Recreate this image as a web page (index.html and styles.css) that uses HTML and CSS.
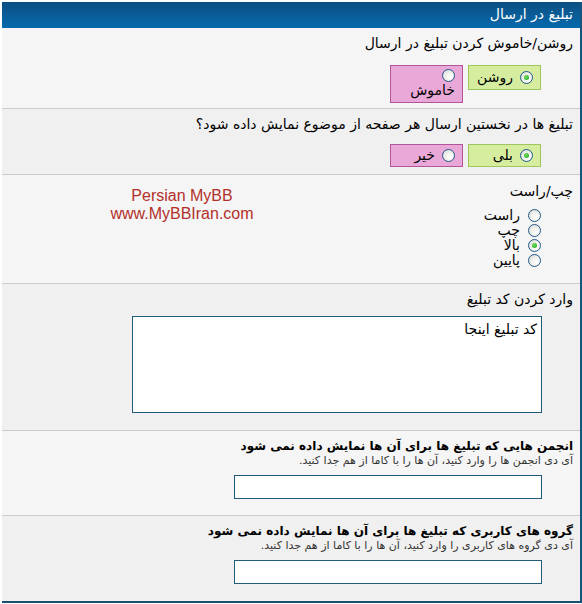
FILE: index.html
```html
<!DOCTYPE html>
<html lang="fa" dir="rtl">
<head>
<meta charset="utf-8">
<title>تبلیغ در ارسال</title>
<link rel="stylesheet" href="styles.css">
</head>
<body>
<div class="panel">
  <div class="head">تبلیغ در ارسال</div>

  <div class="row light first">
    <div class="title">روشن/خاموش کردن تبلیغ در ارسال</div>
    <div class="choices">
      <label class="choice yes"><span class="radio on"></span><span>روشن</span></label>
      <label class="choice no"><span class="radio"></span><span>خاموش</span></label>
    </div>
  </div>

  <div class="row dark">
    <div class="title">تبلیغ ها در نخستین ارسال هر صفحه از موضوع نمایش داده شود؟</div>
    <div class="choices">
      <label class="choice yes"><span class="radio on"></span><span>بلی</span></label>
      <label class="choice no"><span class="radio"></span><span>خیر</span></label>
    </div>
  </div>

  <div class="row light split">
    <div class="side">
      <div class="title">چپ/راست</div>
      <ul class="list">
        <li><span class="radio"></span><span>راست</span></li>
        <li><span class="radio"></span><span>چپ</span></li>
        <li><span class="radio on"></span><span>بالا</span></li>
        <li><span class="radio"></span><span>پایین</span></li>
      </ul>
    </div>
    <div class="promo" dir="ltr">Persian MyBB<br>www.MyBBIran.com</div>
  </div>

  <div class="row dark code">
    <div class="title">وارد کردن کد تبلیغ</div>
    <textarea class="area">کد تبلیغ اینجا</textarea>
  </div>

  <div class="row light field">
    <div class="title strong">انجمن هایی که تبلیغ ها برای آن ها نمایش داده نمی شود</div>
    <div class="desc">آی دی انجمن ها را وارد کنید، آن ها را با کاما از هم جدا کنید.</div>
    <input class="text" type="text">
  </div>

  <div class="row dark field last">
    <div class="title strong">گروه های کاربری که تبلیغ ها برای آن ها نمایش داده نمی شود</div>
    <div class="desc">آی دی گروه های کاربری را وارد کنید، آن ها را با کاما از هم جدا کنید.</div>
    <input class="text" type="text">
  </div>
</div>
</body>
</html>
```

FILE: styles.css
```css
html, body {
  margin: 0;
  padding: 0;
  background: #ffffff;
}

body {
  padding-top: 2px;
  font-family: "DejaVu Sans", "Liberation Sans", sans-serif;
  font-size: 14px;
  color: #000;
}

.panel {
  width: 578px;
  border-right: 2px solid #16557f;
  border-bottom: 2px solid #1d4f6e;
}

.head {
  height: 26px;
  line-height: 24px;
  padding: 0 7px;
  color: #ffffff;
  font-size: 14px;
  background: linear-gradient(to bottom, #0c4e80 0%, #0a5d98 50%, #0568ad 100%);
}

.row {
  padding: 7px 7px 7px;
  border-top: 1px solid #cccccc;
}

.head + .row { border-top: none; }

.light { background: #f5f5f5; }
.dark { background: #f0f0f0; }

.title {
  line-height: 16px;
  font-size: 14px;
}

.title.strong {
  font-size: 12px;
  font-weight: bold;
}

.choices {
  display: flex;
  gap: 5px;
  padding-right: 32px;
  margin-top: 14px;
  align-items: flex-start;
}

.first {
  padding-bottom: 5px;
}

.choice {
  box-sizing: border-box;
  width: 73px;
  padding: 3px 7px;
  display: flex;
  flex-wrap: wrap;
  align-items: center;
  column-gap: 7px;
  line-height: 17px;
  font-size: 14px;
}

.choice.yes {
  background: #d6eda0;
  border: 1px solid #9fc65e;
}

.choice.no {
  background: #eaa8d8;
  border: 1px solid #b1569b;
}

.dark .choices { margin-top: 12px; }
.dark .choice { padding: 2px 7px; }

.radio {
  box-sizing: border-box;
  width: 13px;
  height: 13px;
  border-radius: 50%;
  border: 1px solid #1f5a8b;
  background: radial-gradient(circle at 65% 65%, #ffffff 0%, #f2f2ee 40%, #d6d6cf 100%);
  display: inline-flex;
  align-items: center;
  justify-content: center;
  flex: none;
}

.radio.on::after {
  content: "";
  width: 5px;
  height: 5px;
  border-radius: 50%;
  background: radial-gradient(circle at 40% 40%, #6ede5a, #21a121);
}

.split {
  display: flex;
  justify-content: space-between;
  align-items: flex-start;
  padding-top: 8px;
  padding-bottom: 15px;
}

.list {
  list-style: none;
  margin: 9px 0 0;
  padding: 0 32px 0 0;
  font-size: 14px;
}

.list li {
  display: flex;
  align-items: center;
  gap: 8px;
  height: 15px;
  line-height: 15px;
}

.promo {
  width: 346px;
  margin-top: 4px;
  text-align: center;
  font-family: "Liberation Sans", Arial, sans-serif;
  font-size: 16px;
  line-height: 18px;
  color: #b3302a;
}

.code {
  padding-bottom: 17px;
}

.area {
  display: block;
  box-sizing: border-box;
  width: 410px;
  height: 97px;
  margin: 9px 31px 0 0;
  padding: 5px 4px;
  border: 1px solid #1f5a78;
  background: #ffffff;
  font-family: "DejaVu Sans", "Liberation Sans", sans-serif;
  font-size: 14px;
  line-height: 15px;
  resize: none;
  color: #000;
}

.field {
  padding-bottom: 16px;
}

.last {
  padding-bottom: 17px;
}

.desc {
  font-size: 11px;
  line-height: 14px;
  color: #333333;
}

.text {
  display: block;
  box-sizing: border-box;
  width: 308px;
  height: 24px;
  margin: 7px 31px 0 0;
  padding: 2px 4px;
  border: 1px solid #1f5a78;
  background: #ffffff;
  font-family: "DejaVu Sans", sans-serif;
}
```
